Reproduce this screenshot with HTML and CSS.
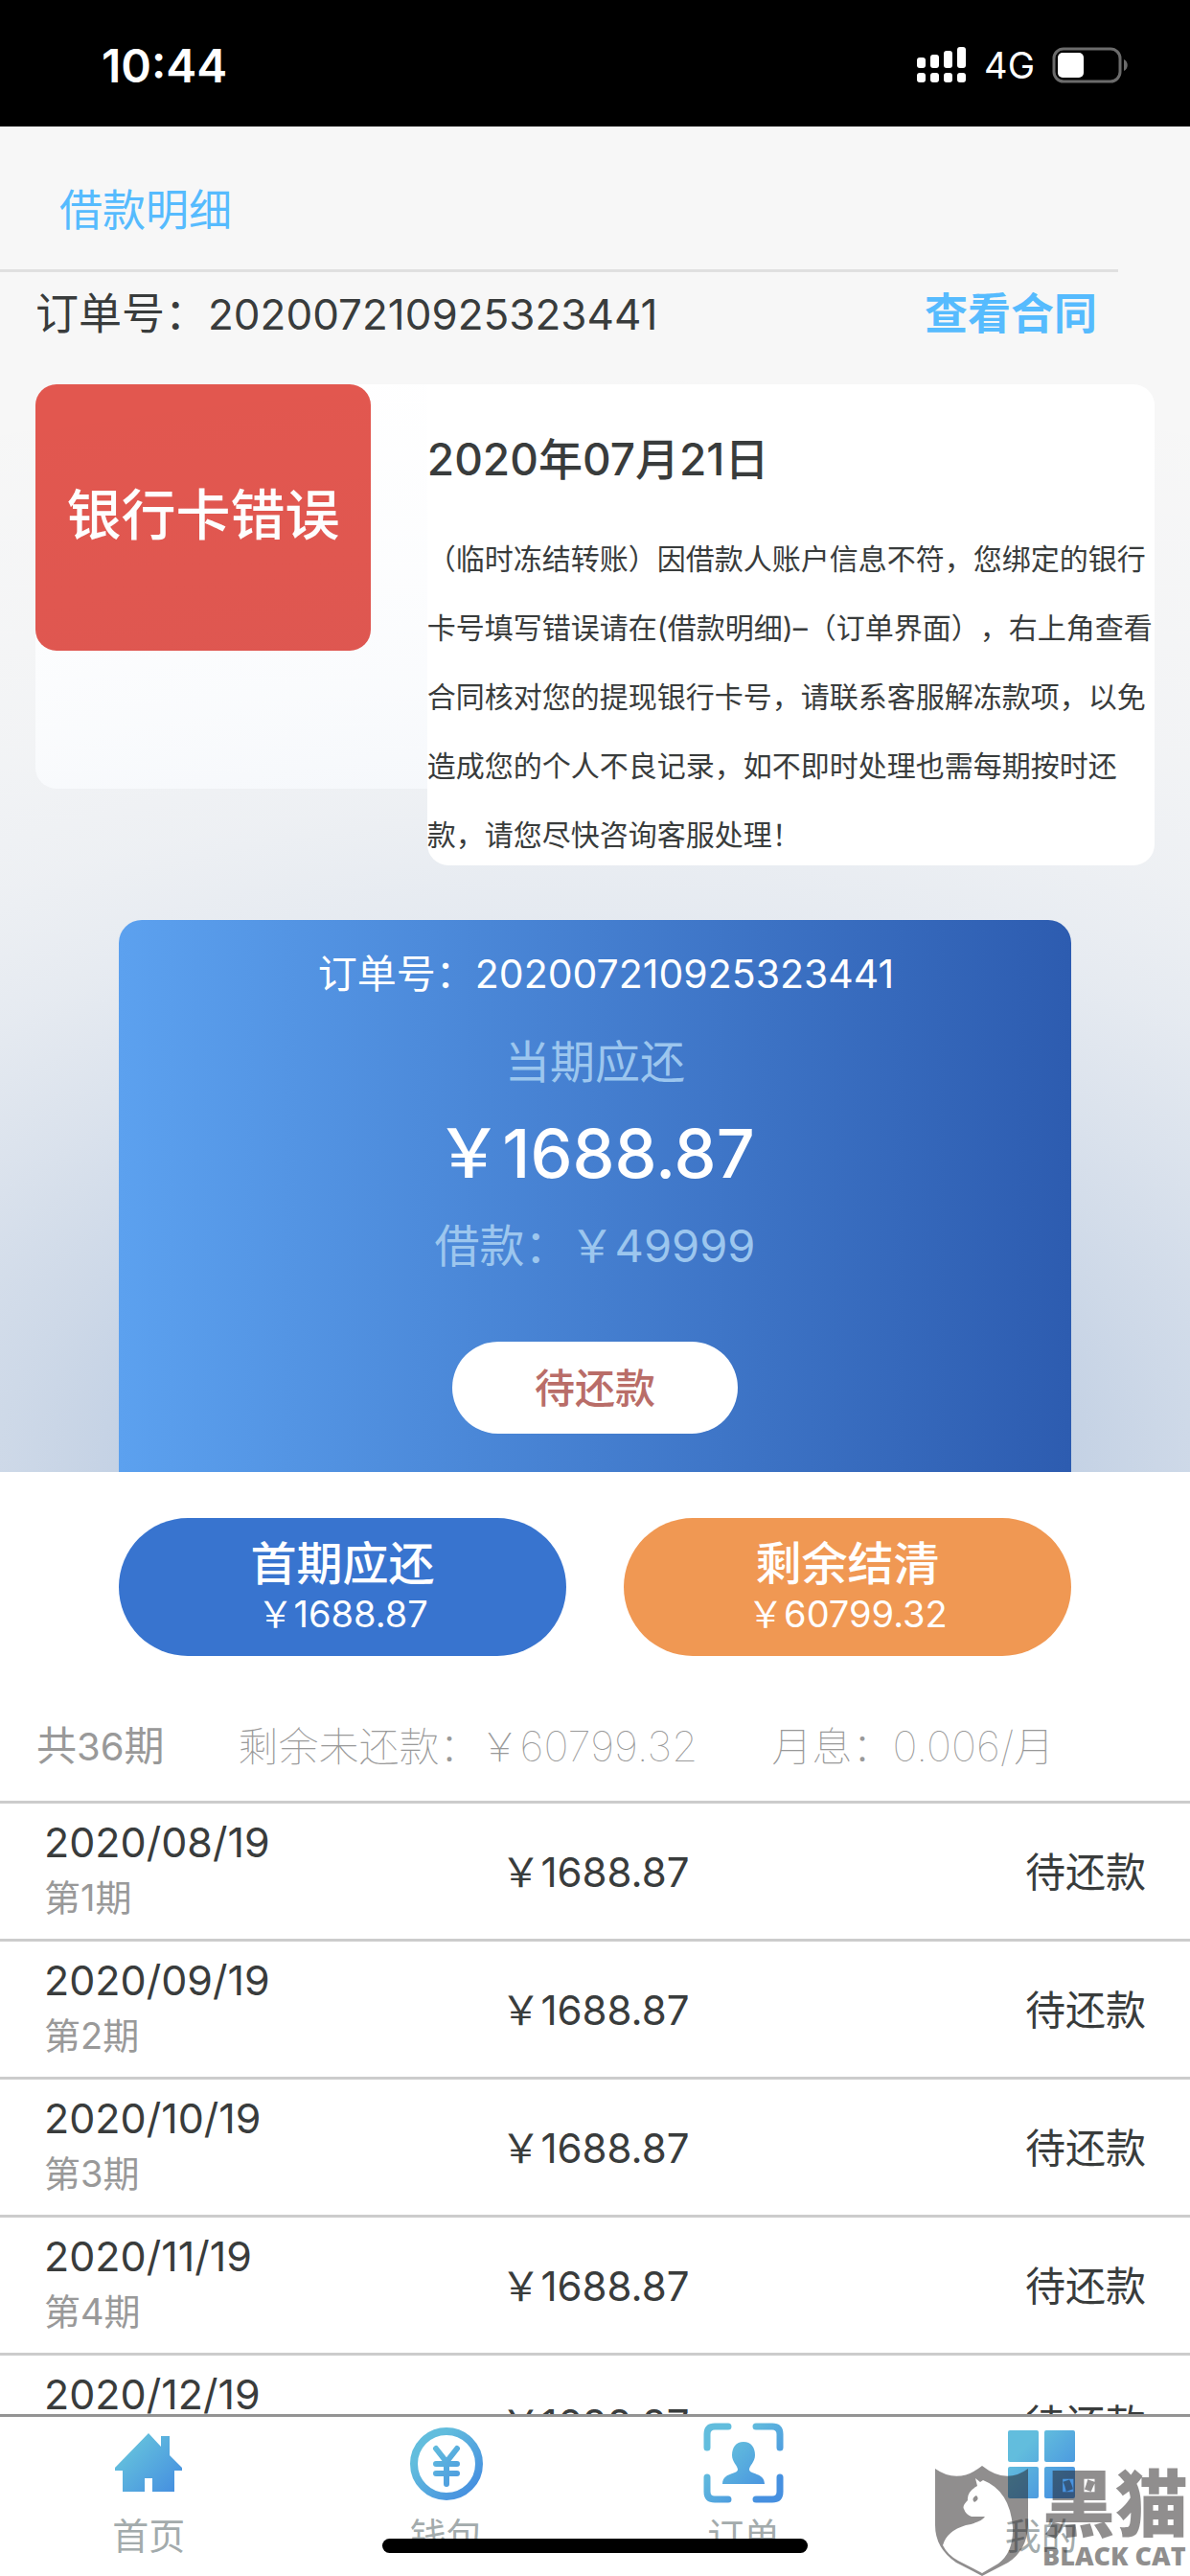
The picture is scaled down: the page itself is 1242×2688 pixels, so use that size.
FILE: index.html
```html
<!DOCTYPE html>
<html lang="zh-CN">
<head>
    <meta charset="UTF-8">
    <meta name="viewport" content="width=device-width, initial-scale=1">
    <title>借款明细</title>
    <link rel="stylesheet" href="styles.css">
</head>
<body>

    <header class="status-bar">
        <span class="clock">10:44</span>
        <div class="status-icons">
            <svg class="signal" viewBox="0 0 52 38" fill="#fff">
                <rect x="0" y="11" width="9" height="11" rx="3"/>
                <rect x="14" y="8" width="9" height="14" rx="3"/>
                <rect x="28" y="4" width="9" height="18" rx="3"/>
                <rect x="42" y="0" width="9" height="22" rx="3"/>
                <rect x="0" y="27" width="9" height="10" rx="3"/>
                <rect x="14" y="27" width="9" height="10" rx="3"/>
                <rect x="28" y="27" width="9" height="10" rx="3"/>
                <rect x="42" y="27" width="9" height="10" rx="3"/>
            </svg>
            <span class="network">4G</span>
            <svg class="battery" viewBox="0 0 80 38">
                <rect x="2" y="2" width="69" height="34" rx="10" fill="none" stroke="#6b6b6b" stroke-width="3"/>
                <rect x="6" y="6" width="27" height="26" rx="5" fill="#fff"/>
                <path d="M75 13c5 2 5 10 0 12z" fill="#6b6b6b"/>
            </svg>
        </div>
    </header>

    <main class="content">
        <section class="top">
            <h1 class="page-title">借款明细</h1>

            <div class="order-row">
                <p>订单号：<span class="num">202007210925323441</span></p>
                <a href="#" class="contract-link">查看合同</a>
            </div>

            <div class="notice">
                <div class="notice-back">
                    <div class="notice-status">银行卡错误</div>
                </div>
                <div class="notice-detail">
                    <h2>2020年07月21日</h2>
                    <p>（临时冻结转账）因借款人账户信息不符，您绑定的银行卡号填写错误请在(借款明细)–（订单界面），右上角查看合同核对您的提现银行卡号，请联系客服解冻款项，以免造成您的个人不良记录，如不即时处理也需每期按时还款，请您尽快咨询客服处理！</p>
                </div>
            </div>

            <div class="bill">
                <p class="bill-order">&nbsp;&nbsp;订单号：202007210925323441</p>
                <p class="bill-label">当期应还</p>
                <p class="bill-amount">￥1688.87</p>
                <p class="bill-label">借款：￥49999</p>
                <button class="bill-state">待还款</button>
            </div>
        </section>

        <section class="actions">
            <button class="pay first"><strong>首期应还</strong><span>￥1688.87</span></button>
            <button class="pay rest"><strong>剩余结清</strong><span>￥60799.32</span></button>
        </section>

        <div class="summary">
            <span class="total">共<span class="num">36</span>期</span>
            <span class="left">剩余未还款：￥<span class="num">60799.32</span></span>
            <span class="rate">月息：<span class="num">0.006/</span>月</span>
        </div>

        <ul class="plan">
            <li><div><time>2020/08/19</time><small>第1期</small></div><span class="money">￥1688.87</span><span class="state">待还款</span></li>
            <li><div><time>2020/09/19</time><small>第2期</small></div><span class="money">￥1688.87</span><span class="state">待还款</span></li>
            <li><div><time>2020/10/19</time><small>第3期</small></div><span class="money">￥1688.87</span><span class="state">待还款</span></li>
            <li><div><time>2020/11/19</time><small>第4期</small></div><span class="money">￥1688.87</span><span class="state">待还款</span></li>
            <li><div><time>2020/12/19</time><small>第5期</small></div><span class="money">￥1688.87</span><span class="state">待还款</span></li>
        </ul>
    </main>

    <nav class="tabs">
        <a href="#">
            <svg viewBox="0 0 84 84">
                <defs>
                    <linearGradient id="blue" gradientUnits="userSpaceOnUse" x1="14" y1="14" x2="70" y2="70">
                        <stop offset="0.2" stop-color="#62bddd"/>
                        <stop offset="1" stop-color="#4690e0"/>
                    </linearGradient>
                </defs>
                <path fill="url(#blue)" d="M42 11L55 25V14H64V34L77 47V50H69V72H46V58H38V72H15V50H7V47Z"/>
            </svg>
            <span>首页</span>
        </a>
        <a href="#">
            <svg viewBox="0 0 84 84" fill="none" stroke="url(#blue)">
                <circle cx="42" cy="43" r="34" stroke-width="8"/>
                <path stroke-width="6" stroke-linecap="round" stroke-linejoin="round" d="M31 27L42 41L53 27M42 41V64M31 43H53M31 53H53"/>
            </svg>
            <span>钱包</span>
        </a>
        <a href="#">
            <svg viewBox="0 0 84 84">
                <path fill="none" stroke="url(#blue)" stroke-width="7" stroke-linecap="round" d="M26 4H12Q4 4 4 12V26M55 4H72Q80 4 80 12V26M4 57V72Q4 80 12 80H26M80 57V72Q80 80 72 80H55"/>
                <path fill="url(#blue)" d="M42 20C50 20 54 26 54 34C54 41 48 45 48 49C48 54 64 52 64 64H20C20 52 36 54 36 49C36 45 30 41 30 34C30 26 34 20 42 20Z"/>
            </svg>
            <span>订单</span>
        </a>
        <a href="#">
            <svg viewBox="0 0 84 84" fill="url(#blue)">
                <rect x="7" y="8" width="32" height="33" rx="2"/>
                <rect x="45" y="8" width="32" height="33" rx="2"/>
                <rect x="7" y="46" width="32" height="33" rx="2"/>
                <rect x="45" y="46" width="32" height="33" rx="2"/>
            </svg>
            <span>我的</span>
        </a>
        <div class="home-indicator"></div>
    </nav>

    <div class="watermark">
        <svg viewBox="0 0 98 115">
            <path fill="#231f20" fill-rule="evenodd" d="M0 3Q24 20 49 0Q74 20 97 3V62Q96 88 76 101L49 115L22 101Q0 86 0 62ZM42 13L44 21Q33 27 34 36Q28 42 30 45Q32 51 38 53H52Q48 59 32 62Q12 68 8 83Q13 93 24 99L49 112L66 102Q82 90 81 64Q78 26 50 15L47 17ZM43 31Q37 34 41 38Q47 35 43 31Z"/>
        </svg>
        <div class="watermark-text">
            <b>黑猫</b>
            <i>BLACK CAT</i>
        </div>
    </div>

</body>
</html>
```
FILE: styles.css
```css
/* Reset default margins and paddings */
* {
    margin: 0;
    padding: 0;
    box-sizing: border-box;
}

body {
    background-color: #fff;
    color: #393c3c;
    font-family: Inter, 'Noto Sans CJK SC', sans-serif;
    font-size: 42px;
    display: flex;
    flex-direction: column;
    height: 100vh;
    overflow: hidden;
}

a {
    text-decoration: none;
}

button {
    border: none;
    font-family: inherit;
    cursor: pointer;
}

/* Status bar */
.status-bar {
    background-color: #000;
    color: #fff;
    display: flex;
    justify-content: space-between;
    align-items: center;
    height: 132px;
    flex-shrink: 0;
    padding: 4px 64px 0 106px;
}

.clock {
    font-size: 48px;
    font-weight: 600;
}

.status-icons {
    display: flex;
    align-items: center;
    gap: 18px;
}

.signal {
    width: 52px;
    height: 38px;
}

.network {
    font-size: 38px;
}

.battery {
    width: 80px;
    height: 38px;
}

/* Main area */
.content {
    flex: 1;
    min-height: 0;
    overflow: hidden;
}

.top {
    position: relative;
    background-color: #f7f7f7;
    overflow: hidden;
}

/* Soft blue glow behind the bill, falls over the notice card too */
.top::before {
    content: '';
    position: absolute;
    inset: 0;
    pointer-events: none;
    background: radial-gradient(ellipse 165% 84% at 50% 100%,
        rgba(26, 85, 166, 0.32) 0%,
        rgba(26, 85, 166, 0.3) 10%,
        rgba(26, 85, 166, 0.26) 20%,
        rgba(26, 85, 166, 0.19) 30%,
        rgba(26, 85, 166, 0.13) 40%,
        rgba(26, 85, 166, 0.08) 50%,
        rgba(26, 85, 166, 0.045) 60%,
        rgba(26, 85, 166, 0.022) 70%,
        rgba(26, 85, 166, 0.01) 80%,
        rgba(26, 85, 166, 0) 100%);
}

.page-title {
    width: 94%;
    padding: 56px 62px 0;
    height: 152px;
    border-bottom: 3px solid #e0e0e0;
    color: #56bbfe;
    font-size: 45px;
    font-weight: 400;
    line-height: 64px;
}

.order-row {
    display: flex;
    justify-content: space-between;
    padding: 12px 97px 41px 37px;
    font-size: 45px;
    line-height: 64px;
}

.order-row .num {
    font-size: 44px;
}

.contract-link {
    color: #56bbfe;
    font-weight: 700;
}

/* Notice card */
.notice {
    display: flex;
    margin: 0 37px;
}

.notice-back {
    width: 35%;
    height: 422px;
    background-color: #fff;
    border-radius: 22px 0 0 22px;
}

.notice-status {
    display: flex;
    align-items: center;
    justify-content: center;
    width: 350px;
    height: 278px;
    padding-bottom: 14px;
    background-color: #e2574f;
    border-radius: 22px;
    color: #fff;
    font-size: 57px;
    font-weight: 500;
}

.notice-detail {
    flex: 1;
    position: relative;
    z-index: 1;
    height: 502px;
    padding-top: 46px;
    background-color: #fff;
    border-radius: 0 22px 22px 22px;
}

.notice-detail h2 {
    margin-bottom: 36px;
    font-size: 46px;
    font-weight: 500;
    line-height: 64px;
}

.notice-detail p {
    font-size: 30px;
    line-height: 72px;
    text-spacing-trim: space-all;
}

/* Current bill */
.bill {
    position: relative;
    z-index: 1;
    display: flex;
    flex-direction: column;
    align-items: center;
    width: 80%;
    height: 576px;
    margin: 57px auto 0;
    padding-top: 24px;
    background: linear-gradient(90deg, #5ca1ef, #2d5cb0);
    border-radius: 24px 24px 0 0;
    color: #fff;
}

.bill-order {
    font-size: 41px;
    line-height: 64px;
}

.bill-label {
    margin: 24px 0;
    color: #9cc6ee;
    font-size: 47px;
    line-height: 72px;
}

.bill-amount {
    font-size: 70px;
    font-weight: 500;
    line-height: 72px;
}

.bill-state {
    width: 30%;
    height: 96px;
    margin-top: 40px;
    padding-bottom: 6px;
    background-color: #fff;
    border-radius: 48px;
    color: #b96d68;
    font-size: 42px;
    font-weight: 500;
}

/* Payment buttons */
.actions {
    display: flex;
    gap: 60px;
    width: 80%;
    margin: 48px auto 0;
}

.pay {
    flex: 1;
    display: flex;
    flex-direction: column;
    align-items: center;
    justify-content: center;
    height: 144px;
    border-radius: 72px;
    color: #fff;
    font-size: 38px;
    line-height: 48px;
}

.pay strong {
    font-size: 48px;
    font-weight: 500;
    line-height: 56px;
}

.first {
    background-color: #3874cf;
}

.rest {
    background-color: #f09853;
}

.summary {
    display: flex;
    gap: 77px;
    height: 151px;
    padding: 62px 38px 0;
    color: #999;
    line-height: 64px;
}

.total .num {
    font-size: 40px;
}

.left,
.rate {
    font-weight: 100;
}

.left .num,
.rate .num {
    font-size: 44px;
}

/* Repayment plan */
.plan {
    list-style: none;
}

.plan li {
    display: grid;
    grid-template-columns: 1fr 1fr 1fr;
    align-items: center;
    height: 144px;
    padding: 0 46px 4px;
    border-top: 3px solid #ccc;
}

.plan time,
.plan small {
    display: block;
    line-height: 58px;
}

.plan time {
    font-size: 43px;
}

.plan small {
    color: #999;
    font-size: 38px;
}

.money {
    text-align: center;
}

.state {
    text-align: right;
}

/* Bottom tabs */
.tabs {
    position: relative;
    display: flex;
    flex-shrink: 0;
    height: 169px;
    border-top: 3px solid #949494;
    background-color: #fff;
}

.tabs a {
    flex: 1;
    display: flex;
    flex-direction: column;
    align-items: center;
    padding-top: 6px;
    color: #a3abac;
    font-size: 38px;
    line-height: 56px;
}

.tabs svg {
    width: 84px;
    height: 84px;
    margin-bottom: 6px;
}

.home-indicator {
    position: absolute;
    left: 50%;
    bottom: 24px;
    width: 444px;
    height: 15px;
    margin-left: -222px;
    background-color: #000;
    border-radius: 8px;
}

.watermark {
    position: absolute;
    right: 2px;
    bottom: 0;
    display: flex;
    gap: 14px;
    opacity: 0.5;
    color: #231f20;
}

.watermark svg {
    width: 98px;
    height: 115px;
}

.watermark-text {
    display: flex;
    flex-direction: column;
}

.watermark b {
    font-size: 76px;
    font-weight: 900;
    line-height: 80px;
}

.watermark i {
    font: 800 27px 'Open Sans', sans-serif;
    line-height: 28px;
}
```
